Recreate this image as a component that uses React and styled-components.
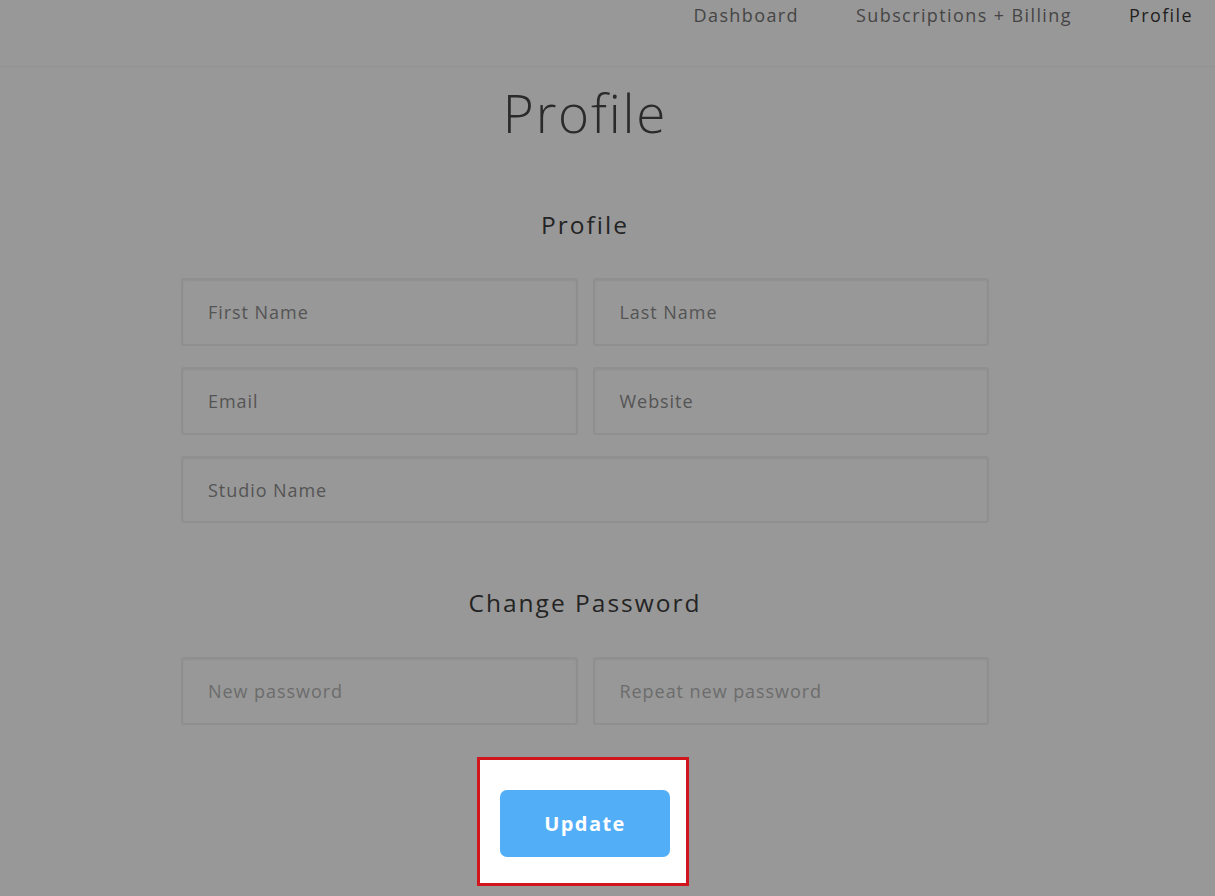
import React from "react";
import styled, { createGlobalStyle } from "styled-components";

const Global = createGlobalStyle`
  html, body { margin: 0; padding: 0; background: #989898; }
  body { font-family: "Open Sans", "Liberation Sans", sans-serif; }
  * { box-sizing: border-box; }
`;

const Page = styled.div`
  width: 1215px;
  height: 896px;
  background: #989898;
  overflow: hidden;
`;

const Header = styled.header`
  height: 67px;
  border-bottom: 1px solid #929292;
  display: flex;
  justify-content: flex-end;
  align-items: flex-start;
  padding: 3px 22px 0 0;
  gap: 57px;
`;

const NavLink = styled.a`
  font-size: 18px;
  line-height: 24px;
  font-weight: 500;
  letter-spacing: 1.4px;
  color: ${(p) => (p.$active ? "#1f1f1f" : "#454545")};
  text-decoration: none;
`;

const Main = styled.main`
  display: flex;
  flex-direction: column;
  align-items: center;
  padding-right: 45px;
`;

const Title = styled.h1`
  margin: 14px 0 0;
  font-size: 53px;
  line-height: 64px;
  font-weight: 300;
  color: #2a2a2a;
  letter-spacing: 1.8px;
`;

const SectionTitle = styled.h2`
  margin: ${(p) => p.$mt}px 0 0;
  font-size: 24.5px;
  line-height: 32px;
  font-weight: 400;
  color: #242424;
  letter-spacing: 2px;
`;

const Grid = styled.div`
  margin-top: ${(p) => p.$mt}px;
  width: 808px;
  display: grid;
  grid-template-columns: 1fr 1fr;
  column-gap: 15px;
  row-gap: 21px;
`;

const Field = styled.div`
  grid-column: ${(p) => (p.$full ? "1 / span 2" : "auto")};
  height: ${(p) => p.$h || 68}px;
  border: 2px solid #8f8f8f;
  border-radius: 3px;
  background: #989898;
  box-shadow: inset 0 1px 2px rgba(0, 0, 0, 0.06);
  display: flex;
  align-items: center;
  padding-left: 25px;
  font-size: 18px;
  letter-spacing: 0.95px;
  color: ${(p) => (p.$light ? "#6c6c6c" : "#545454")};
`;

const Highlight = styled.div`
  margin-top: 32px;
  margin-right: 5px;
  width: 212px;
  height: 129px;
  border: 3px solid #d0161c;
  background: #ffffff;
  display: flex;
  align-items: center;
  justify-content: center;
  padding: 4px 0 0 5px;
`;

const UpdateButton = styled.button`
  width: 170px;
  height: 67px;
  border: none;
  border-radius: 7px;
  background: #53aef8;
  color: #ffffff;
  font-family: inherit;
  font-size: 20px;
  font-weight: 700;
  letter-spacing: 1.4px;
  cursor: pointer;
`;

export default function App() {
  return (
    <Page>
      <Global />
      <Header>
        <NavLink>Dashboard</NavLink>
        <NavLink>Subscriptions + Billing</NavLink>
        <NavLink $active>Profile</NavLink>
      </Header>
      <Main>
        <Title>Profile</Title>
        <SectionTitle $mt={64}>Profile</SectionTitle>
        <Grid $mt={37}>
          <Field>First Name</Field>
          <Field>Last Name</Field>
          <Field>Email</Field>
          <Field>Website</Field>
          <Field $full $h={67}>Studio Name</Field>
        </Grid>
        <SectionTitle $mt={64}>Change Password</SectionTitle>
        <Grid $mt={38}>
          <Field $light>New password</Field>
          <Field $light>Repeat new password</Field>
        </Grid>
        <Highlight>
          <UpdateButton>Update</UpdateButton>
        </Highlight>
      </Main>
    </Page>
  );
}
